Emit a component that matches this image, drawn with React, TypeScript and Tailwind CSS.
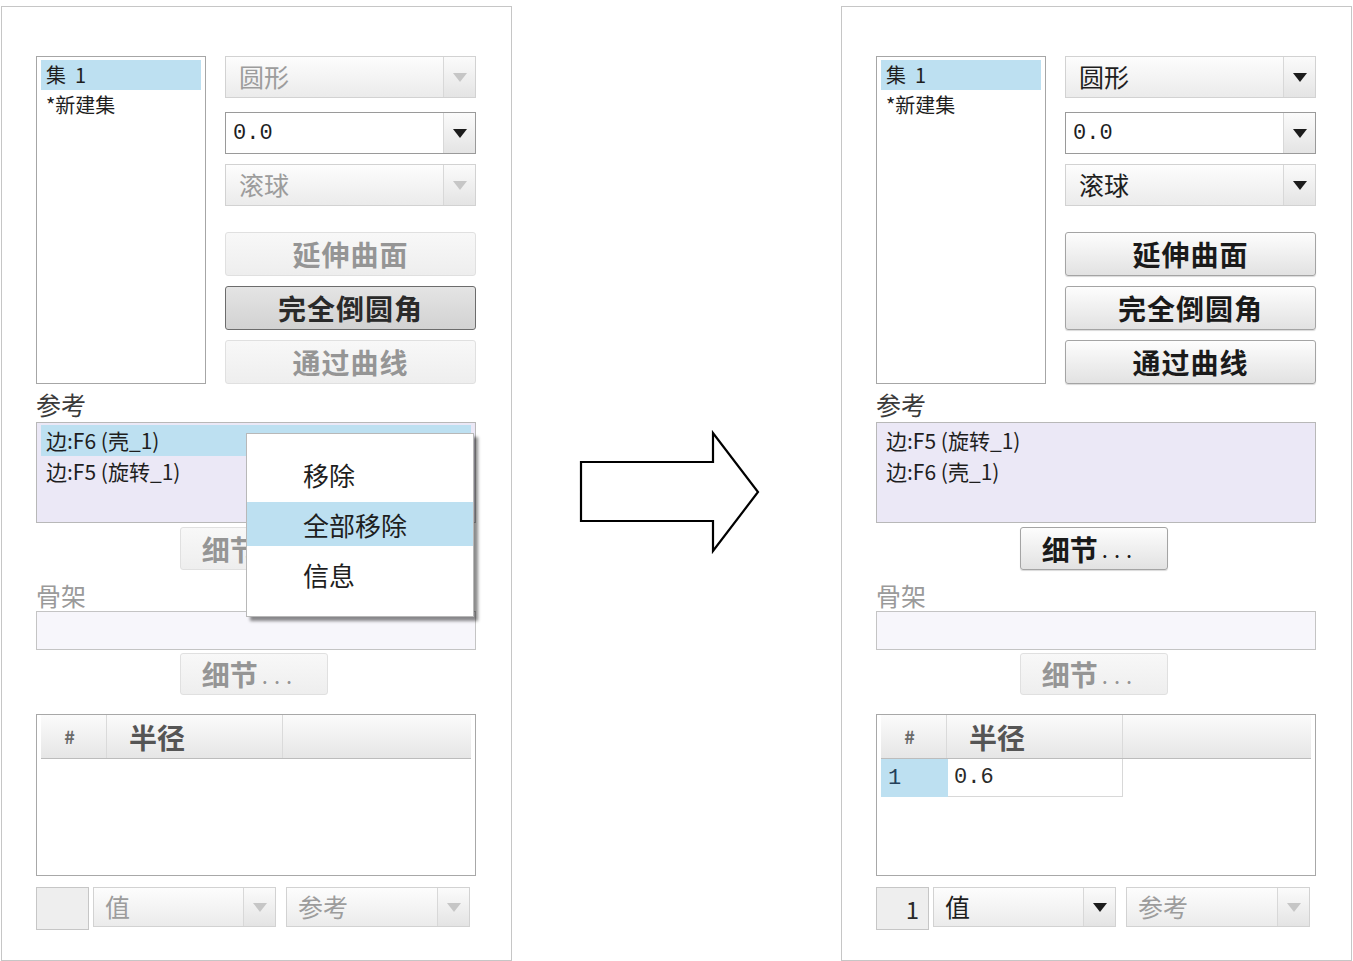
import clsx from 'clsx'

function Tri({ on }: { on: boolean }) {
  return (
    <svg width="14" height="9" viewBox="0 0 14 9">
      <path d="M0 0H14L7 9Z" fill={on ? '#1c1c1c' : '#c6c6c6'} />
    </svg>
  )
}

interface SelectProps {
  text: string
  on: boolean
  white?: boolean
  mono?: boolean
  className?: string
  textClass?: string
}

function Select({ text, on, white, mono, className, textClass }: SelectProps) {
  return (
    <div
      className={clsx(
        'flex border',
        white ? 'border-[#9a9a9a] bg-white' : 'border-[#d2d2d2] bg-linear-to-b from-[#fdfdfd] to-[#ebebeb]',
        on && !white && 'border-[#b4b4b4]',
        className,
      )}
    >
      <div
        className={clsx(
          'flex flex-1 items-center',
          on ? 'text-[#1e1e1e]' : 'text-[#9c9c9c]',
          mono ? "pl-[7px] font-['Liberation_Mono',monospace] text-[22px]" : 'text-[25px]',
          textClass,
        )}
      >
        {text}
      </div>
      <div className="flex w-[32px] items-center justify-center border-l border-[#d8d8d8] bg-linear-to-b from-[#fbfbfb] to-[#e4e4e4]">
        <Tri on={on} />
      </div>
    </div>
  )
}

type BtnState = 'off' | 'on' | 'pressed'

function Btn({ text, state, className }: { text: string; state: BtnState; className?: string }) {
  return (
    <div
      className={clsx(
        'flex items-center justify-center rounded-[3px] border text-[28px] font-bold tracking-[1px]',
        state === 'off' && 'border-[#e0e0e0] bg-linear-to-b from-[#f8f8f8] to-[#eeeeee] text-[#959595]',
        state === 'on' && 'border-[#a4a4a4] bg-linear-to-b from-[#fdfdfd] to-[#e2e2e2] text-[#1a1a1a] shadow-[0_1px_1px_rgba(0,0,0,0.15)]',
        state === 'pressed' && 'border-[#6c6c6c] bg-linear-to-b from-[#e4e4e4] to-[#d2d2d2] text-[#2a2a2a]',
        className,
      )}
    >
      {text}
    </div>
  )
}

function Detail({ on, className }: { on: boolean; className?: string }) {
  return (
    <div
      className={clsx(
        'ml-[144px] flex w-[148px] items-center justify-center rounded-[3px] border pr-[8px]',
        on
          ? 'border-[#a4a4a4] bg-linear-to-b from-[#fdfdfd] to-[#e2e2e2] text-[#1a1a1a] shadow-[0_1px_1px_rgba(0,0,0,0.15)]'
          : 'border-[#e0e0e0] bg-linear-to-b from-[#f8f8f8] to-[#eeeeee] text-[#959595]',
        className,
      )}
    >
      <span className="text-[28px] font-bold">细节</span>
      <span className="ml-[4px] text-[22px] tracking-[6px]">...</span>
    </div>
  )
}

function Panel({ after }: { after: boolean }) {
  const refs = after ? ['边:F5 (旋转_1)', '边:F6 (壳_1)'] : ['边:F6 (壳_1)', '边:F5 (旋转_1)']

  return (
    <div className="relative mt-[6px] h-[955px] w-[511px] shrink-0 border border-[#c6c6c6] pl-[34px] pt-[49px]">
      <div className="w-[440px]">
        {/* set list + type controls */}
        <div className="flex h-[328px]">
          <div className="w-[170px] border border-[#a6a6a6] px-[4px] pt-[3px] text-[20px] leading-[30px] text-[#1e1e1e]">
            <div className="h-[30px] whitespace-pre bg-[#bde0f1] pl-[5px]">集  1</div>
            <div className="h-[30px] pl-[5px]">*新建集</div>
          </div>
          <div className="ml-[19px] flex w-[251px] flex-col">
            <Select text="圆形" on={after} className="h-[42px]" textClass="pl-[13px]" />
            <Select text="0.0" on white mono className="mt-[14px] h-[42px]" />
            <Select text="滚球" on={after} className="mt-[10px] h-[42px]" textClass="pl-[13px]" />
            <Btn text="延伸曲面" state={after ? 'on' : 'off'} className="mt-[26px] h-[44px]" />
            <Btn text="完全倒圆角" state={after ? 'on' : 'pressed'} className="mt-[10px] h-[44px]" />
            <Btn text="通过曲线" state={after ? 'on' : 'off'} className="mt-[10px] h-[44px]" />
          </div>
        </div>

        {/* references */}
        <div className="h-[38px] pt-[5px] text-[25px] leading-[30px] text-[#3a3a3a]">参考</div>
        <div className="h-[101px] border border-[#b8b8b8] bg-[#ebe8f6] px-[4px] pt-[2px] text-[21px] leading-[31px] text-[#1e1e1e]">
          {refs.map((r, i) => (
            <div key={r} className={clsx('h-[31px] pl-[5px]', !after && i === 0 && 'bg-[#bde0f1]')}>
              {r}
            </div>
          ))}
        </div>
        <Detail on={after} className="mt-[4px] h-[43px]" />

        {/* skeleton */}
        <div className="h-[41px] pt-[10px] text-[25px] leading-[30px] text-[#9a9a9a]">骨架</div>
        <div className="h-[39px] border border-[#c4c4c4] bg-[#f7f6fb]" />
        <Detail on={false} className="mt-[3px] h-[42px]" />

        {/* radius table */}
        <div className="mt-[19px] h-[162px] border border-[#a8a8a8] bg-white px-[4px]">
          <div className="flex h-[44px] border-b border-[#bcbcbc] bg-linear-to-b from-[#fbfbfb] to-[#e6e6e6]">
            <div className="flex w-[66px] items-center justify-center border-r border-[#dadada] pr-[8px] text-[18px] font-bold text-[#6a6a6a]">
              #
            </div>
            <div className="flex w-[176px] items-center border-r border-[#dadada] pl-[22px] text-[28px] font-bold text-[#555]">
              半径
            </div>
            <div className="flex-1" />
          </div>
          {after && (
            <div className="flex h-[38px]">
              <div className="flex w-[67px] items-center bg-[#bde0f1] pl-[7px] font-['Liberation_Mono',monospace] text-[22px] text-[#24405a]">
                1
              </div>
              <div className="flex w-[175px] items-center border-r border-b border-[#d8d8d8] pl-[6px] font-['Liberation_Mono',monospace] text-[22px] text-[#2a2a2a]">
                0.6
              </div>
            </div>
          )}
        </div>

        {/* bottom row */}
        <div className="mt-[11px] flex h-[43px] items-start">
          <div className="flex h-[43px] w-[53px] items-center justify-end border border-[#c6c6c6] bg-[#eeeeee] pr-[9px] text-[24px] text-[#2a2a2a]">
            {after ? '1' : ''}
          </div>
          <Select text="值" on={after} className="ml-[4px] h-[40px] w-[183px]" textClass="pl-[11px]" />
          <Select text="参考" on={false} className="ml-[10px] h-[40px] w-[184px]" textClass="pl-[11px]" />
        </div>
      </div>

      {/* context menu */}
      {!after && (
        <div className="absolute left-[244px] top-[426px] h-[184px] w-[228px] border border-[#b8b8b8] bg-white pt-[18px] text-[26px] text-[#1e1e1e] shadow-[4px_4px_3px_rgba(0,0,0,0.45)]">
          <div className="flex h-[44px] items-center pl-[56px]">移除</div>
          <div className="mt-[6px] flex h-[44px] items-center bg-[#bde0f1] pl-[56px]">全部移除</div>
          <div className="mt-[6px] flex h-[44px] items-center pl-[56px]">信息</div>
        </div>
      )}
    </div>
  )
}

export default function App() {
  return (
    <div className="flex h-[961px] w-[1353px] overflow-hidden bg-white font-['Noto_Sans_CJK_SC',sans-serif]">
      <div className="ml-[1px]">
        <Panel after={false} />
      </div>
      <div className="w-[329px] shrink-0 pl-[67px] pt-[430px]">
        <svg width="182" height="124" viewBox="0 0 182 124">
          <path
            d="M2 32H134V3L179 62L134 121V91H2Z"
            fill="white"
            stroke="black"
            strokeWidth="2.2"
            strokeLinejoin="miter"
          />
        </svg>
      </div>
      <Panel after />
    </div>
  )
}
